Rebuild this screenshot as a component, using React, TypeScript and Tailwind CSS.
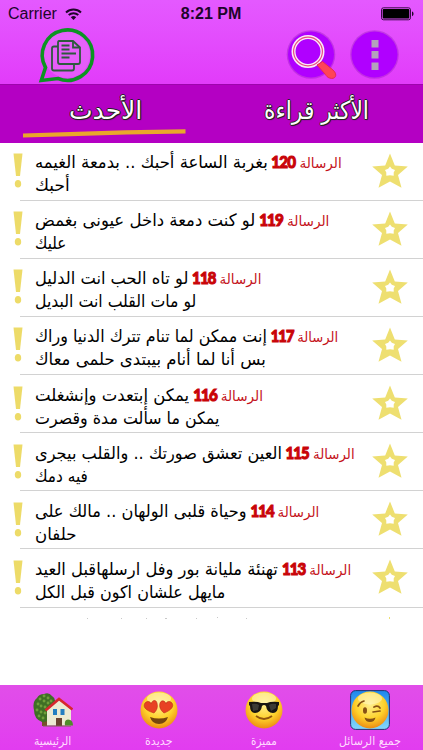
import { useLayoutEffect, useRef, useState, type ReactNode } from "react"

interface Message {
        id: number,
        first: string,
        second: string,
        firstWidth: number,
        secondWidth: number
}

const messages: Message[] = [
        { id: 120, first: "بغربة الساعة أحبك .. بدمعة الغيمه", second: "أحبك", firstWidth: 307, secondWidth: 35 },
        { id: 119, first: "لو كنت دمعة داخل عيونى بغمض", second: "عليك", firstWidth: 294, secondWidth: 31 },
        { id: 118, first: "لو تاه الحب انت الدليل", second: "لو مات القلب انت البديل", firstWidth: 226, secondWidth: 161 },
        { id: 117, first: "إنت ممكن لما تنام تترك الدنيا وراك", second: "بس أنا لما أنام بيبتدى حلمى معاك", firstWidth: 303, secondWidth: 231 },
        { id: 116, first: "يمكن إبتعدت وإنشغلت", second: "يمكن ما سألت مدة وقصرت", firstWidth: 228, secondWidth: 184 },
        { id: 115, first: "العين تعشق صورتك .. والقلب بيجرى", second: "فيه دمك", firstWidth: 320, secondWidth: 53 },
        { id: 114, first: "وحياة قلبى الولهان .. مالك على", second: "حلفان", firstWidth: 284, secondWidth: 41 },
        { id: 113, first: "تهنئة مليانة بور وفل ارسلهاقبل العيد", second: "مايهل علشان اكون قبل الكل", firstWidth: 316, secondWidth: 190 },
]

// keeps a line of text on one row at the given width
function FitText(props: { width: number, className?: string, children: ReactNode }) {
        const ref = useRef<HTMLSpanElement>(null)
        const [scale, setScale] = useState(1)

        useLayoutEffect(() => {
                const fit = () => {
                        if (ref.current) setScale(props.width / ref.current.offsetWidth)
                }
                fit()
                document.fonts.ready.then(fit)
        }, [props.width])

        return <div dir="ltr" className={props.className} style={{ width: props.width }}>
                <span ref={ref} dir="rtl" className="inline-block origin-left whitespace-nowrap" style={{ transform: `scaleX(${scale})` }}>
                        {props.children}
                </span>
        </div>
}

function StatusBar() {
        return <div className="flex h-[28px] items-center justify-between pl-2 pr-[9px] font-['Liberation_Sans'] text-[#20052a]">
                <div className="flex w-[100px] items-center gap-[8px] text-[16px]">
                        Carrier
                        <svg width="17" height="12" viewBox="0 0 17 12" fill="none" stroke="#20052a" strokeWidth="2" className="shrink-0">
                                <path d="M1 4.4a11 11 0 0 1 15 0M3.7 7a7.2 7.2 0 0 1 9.6 0" />
                                <path d="M8.5 12 5.8 9.2a4 4 0 0 1 5.4 0z" fill="#20052a" stroke="none" />
                        </svg>
                </div>
                <div className="text-[16px] font-bold">8:21 PM</div>
                <div className="flex w-[100px] justify-end">
                        <svg width="33" height="14" viewBox="0 0 33 14">
                                <rect x=".5" y=".8" width="29" height="12" rx="2" fill="none" stroke="#3b0a48" />
                                <rect x="1.7" y="2" width="26.6" height="9.6" rx="1" fill="#000" />
                                <path d="M31 4.6c2 .5 2 4 0 4.6z" fill="#20052a" />
                        </svg>
                </div>
        </div>
}

function ChatIcon() {
        return <svg width="56" height="56" viewBox="0 0 56 56" fill="none" className="shrink-0 overflow-visible">
                <circle cx="29" cy="27" r="23" fill="#ec8ff5" fillOpacity=".35" />
                <path d="M7.500 39.500A25.200 25.200 0 1 1 20 50.500L3.300 52.500z" stroke="#0c9422" strokeWidth="3.600" />
                <g stroke="#2d5a3d" strokeWidth="1.800">
                        <path d="M21 13h14l7 6.500V34q0 2-2 2H22q-2 0-2-2V15q0-2 1-2z" />
                        <path d="M35 13v6.500h6.500" />
                        <path d="M23.500 17.500h8M23.500 21.500h8M23.500 25.500h14.500M23.500 29.500h8" />
                        <path d="M20 18.500h-4q-2 0-2 2v20q0 2 2 2h18q2 0 2-2V36" />
                </g>
        </svg>
}

function SearchIcon() {
        return <svg width="54" height="52" viewBox="0 0 54 52" className="shrink-0 overflow-visible">
                <circle cx="24" cy="26.500" r="24.300" fill="#7a05ae" fillOpacity=".3" />
                <circle cx="24" cy="26.500" r="23" fill="#b000ff" />
                <circle cx="21" cy="23.500" r="14.500" fill="none" stroke="#fbe9f8" strokeWidth="4" />
                <circle cx="21" cy="23.500" r="14.400" fill="none" stroke="#ea4b82" strokeWidth="1.200" />
                <path d="M30 37 35.500 33.500 46 42c5.500 5 2 10-3.500 8-2-.5-3-2-4-3.500z" fill="#ff4458" stroke="#e72858" strokeWidth="1" />
        </svg>
}

function MenuIcon() {
        return <svg width="50" height="52" viewBox="0 0 50 52" className="shrink-0">
                <circle cx="24.500" cy="26.500" r="24.300" fill="#7a05ae" fillOpacity=".3" />
                <circle cx="24.500" cy="26.500" r="23" fill="#b000ff" />
                <path d="M21.500 12h7v7.500h-7zM21.500 23h7v7.500h-7zM21.500 34.500h7V42h-7z" fill="#b3a3bb" />
        </svg>
}

function Star() {
        return <svg width="36" height="36" viewBox="0 0 36 36" className="shrink-0">
                <path d="M18 .5 22.800 12.400 35.800 13.600 26 22 29.500 34.700 18 28.500 6.500 34.700 10 22 .2 13.600 13.200 12.400z" fill="#eedf70" />
                <path d="M18 13.500 19.800 15.800 23 17 21.700 19.600 21.700 22.800 18 22.300 14.300 22.800 14.300 19.600 13 17 16.200 15.800z" fill="#fff" />
        </svg>
}

function Exclamation() {
        return <svg width="10" height="36" viewBox="0 0 10 36" className="shrink-0" fill="#eddb68">
                <path d="M.5.5h9L7 23H3z" />
                <ellipse cx="5" cy="30.700" rx="3.200" ry="3.800" />
        </svg>
}

function Row(props: Message) {
        return <div className="flex h-[58.15px] pl-[13px]">
                <div className="w-[7px] pt-[10.500px]">
                        <Exclamation />
                </div>
                <div className="flex flex-1 justify-between border-b border-[#d2d2d2] pl-[15px] pr-[15px]">
                        <div className="pt-[8.500px] font-['DejaVu_Sans'] text-[17px] leading-[22px] text-black">
                                <FitText width={props.firstWidth}>
                                        <span className="text-[14px] text-[#c4121a]">الرسالة</span>
                                        <span className="mx-[3px] inline-block scale-x-[.92] font-['Lato'] text-[17px] font-black leading-none tracking-[-1px] text-[#c90408] [-webkit-text-stroke:1.1px_#c90408]">{props.id}</span>
                                        {props.first}
                                </FitText>
                                <FitText width={props.secondWidth}>{props.second}</FitText>
                        </div>
                        <div className="w-[36px] pt-[10px]">
                                <Star />
                        </div>
                </div>
        </div>
}

function FaceBase(props: { id: string }) {
        return <>
                <defs>
                        <radialGradient id={props.id} cx=".5" cy=".35" r=".65">
                                <stop offset="0" stopColor="#ffef91" />
                                <stop offset=".6" stopColor="#fed22b" />
                                <stop offset="1" stopColor="#ed8c13" />
                        </radialGradient>
                </defs>
                <circle cx="20" cy="20" r="18.500" fill={`url(#${props.id})`} />
                <ellipse cx="20" cy="8.500" rx="12" ry="6" fill="#fff6bd" opacity=".6" />
        </>
}

function HouseIcon() {
        return <svg width="40" height="40" viewBox="0 0 40 40">
                <path d="M9 25h5v11H9z" fill="#76512b" />
                <path d="M11 4q5-2 8 2 5 3 2 9 1 7-3 12-4 6-9 5Q1 29 1 20-1 12 4 8q2-4 7-4z" fill="#3f6f25" />
                <path d="M11 6h.1M7 9h.1M15 8h.1M11 11h.1M5 14h.1M8 16h.1M15 13h.1M12 17h.1M4 20h.1M8 22h.1M12 23h.1M6 26h.1M10 28h.1M18 11h.1M17 17h.1" stroke="#6f9f3a" strokeWidth="2.800" strokeLinecap="round" />
                <path d="M14 20 26 9.500 38 20v15.500H14z" fill="#ecebd2" />
                <path d="M12.500 20.500 26 9 39.500 19.500" fill="none" stroke="#d7272d" strokeWidth="2.600" />
                <path d="M20 19h4v6h-4zM27.500 19h4v6h-4z" fill="#237fc1" />
                <path d="M23 28h6v8h-6z" fill="#69432f" />
                <path d="M32 35.500q-1-6 3-6 5 0 5 6z" fill="#4f8d2a" />
                <path d="M10 36h28" stroke="#7a684c" />
        </svg>
}

function HeartsIcon() {
        return <svg width="40" height="40" viewBox="0 0 40 40">
                <FaceBase id="hearts" />
                <path d="M15 23C5 20 4 16 6 13c3-3 6-1 6 1 1-4 5-5 6-1s0 7-3 10zM25 23c-4-3-5-7-4-10s5-3 6 1c0-2 3-4 6-1 2 3 0 7-8 10z" fill="#e84124" stroke="#bb2b18" strokeWidth=".6" />
                <path d="M11 27q9 3 18 0-2 7-9 7t-9-7z" fill="#76460e" />
        </svg>
}

function CoolIcon() {
        return <svg width="40" height="40" viewBox="0 0 40 40">
                <FaceBase id="cool" />
                <path d="M5 12q8-1 12 1h6q4-2 12-1v3l-1 1q0 7-5 7-6 0-7-7-2-2-4 0-1 7-7 7-5 0-5-7l-1-1z" fill="#191613" />
                <path d="M8 14q4-1 7 1l-1 5-5 1zM25 15q3-2 7-1v4l-5 3z" fill="#4c4b45" opacity=".7" />
                <path d="M12 26q8 6 16 0" fill="none" stroke="#91540d" strokeWidth="1.800" />
        </svg>
}

function WinkIcon() {
        return <svg width="40" height="40" viewBox="0 0 40 40">
                <defs>
                        <linearGradient id="sky" x1="0" y1="0" x2="0" y2="1">
                                <stop stopColor="#1d87ed" />
                                <stop offset="1" stopColor="#83d8fc" />
                        </linearGradient>
                </defs>
                <rect x=".6" y=".6" width="38.800" height="38.800" rx="5" fill="url(#sky)" stroke="#27316f" />
                <FaceBase id="wink" />
                <g fill="none" stroke="#865014" strokeWidth="1.700" strokeLinecap="round">
                        <path d="M8 16q2-4 6-5M24 17q4-2 6 1M23 22l7-1" />
                </g>
                <path d="M14.500 27.500q5.500 2.500 11 0-1 4.500-5.500 4.500t-5.500-4.500z" fill="#865014" />
                <ellipse cx="15" cy="20.500" rx="2" ry="3.200" fill="#865014" />
        </svg>
}

function NavItem(props: { label: string, width: number, children: ReactNode }) {
        return <div className="flex flex-col items-center pt-[4.500px]">
                {props.children}
                <FitText width={props.width} className="mt-[3px] font-['DejaVu_Sans'] text-[12px] leading-4 text-[#ffd9ff]">{props.label}</FitText>
        </div>
}

const tabText = "font-['DejaVu_Sans'] text-[25px] leading-[30px] text-white [text-shadow:1px_0_#222,-1px_0_#222,0_1px_#222,0_-1px_#222,1px_1px_1px_#222]"

export default function App() {
        return <div className="flex h-[750px] w-[423px] flex-col overflow-hidden bg-white">
                <div className="h-[84px] bg-linear-to-b from-[#e459ff] to-[#e23bfa]">
                        <StatusBar />
                        <div className="flex items-start pl-[38px] pr-[23px]">
                                <ChatIcon />
                                <div className="ml-auto flex gap-[9px]">
                                        <SearchIcon />
                                        <MenuIcon />
                                </div>
                        </div>
                </div>
                <div className="flex h-[58.500px] shrink-0 border-t border-[#9e04ad] bg-[#b400c3]">
                        <div className="flex w-[211px] flex-col pl-[22px] pt-[11px]">
                                <FitText width={73} className={`ml-[47px] ${tabText}`}>الأحدث</FitText>
                                <svg width="164" height="9" viewBox="0 0 164 9" className="mt-[3px]">
                                        <path d="M1 4.500 103 1.300 163.500 .3V4.500L105 5.500 48 7.300 1 8.500z" fill="#e9a72b" />
                                </svg>
                        </div>
                        <div className="flex flex-1 pl-[53px] pt-[11px]">
                                <FitText width={105} className={tabText}>الأكثر قراءة</FitText>
                        </div>
                </div>
                <div className="flex h-[542.500px] flex-col">
                        {messages.map(message => <Row key={message.id} {...message} />)}
                        <svg width="423" height="12" viewBox="0 0 423 12" fill="#c8c8c8">
                                <path d="M87 10h1v1h-1zM121 10h1v1h-1zM146 10h1v1h-1zM165 10h2v1h-2zM196 10h1v1h-1zM217 9h1v1h-1zM246 10h1v1h-1z" />
                                <path d="M389 9h1v2h-1z" fill="#eedf70" />
                        </svg>
                </div>
                <div className="grid h-[65px] shrink-0 grid-cols-4 bg-linear-to-b from-[#e14ee9] to-[#e23cf0]">
                        <NavItem label="الرئيسية" width={37}><HouseIcon /></NavItem>
                        <NavItem label="جديدة" width={28}><HeartsIcon /></NavItem>
                        <NavItem label="مميزة" width={26}><CoolIcon /></NavItem>
                        <NavItem label="جميع الرسائل" width={62}><WinkIcon /></NavItem>
                </div>
        </div>
}
